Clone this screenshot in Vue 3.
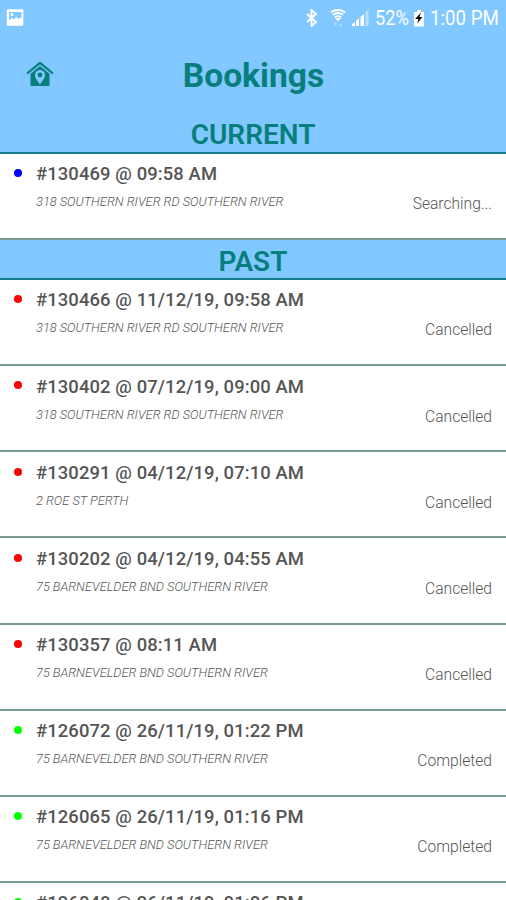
<script setup>
import { ref } from 'vue'

const current = ref([
  { id: 130469, time: '09:58 AM', address: '318 SOUTHERN RIVER RD SOUTHERN RIVER', status: 'Searching...' }
])

const past = ref([
  { id: 130466, time: '11/12/19, 09:58 AM', address: '318 SOUTHERN RIVER RD SOUTHERN RIVER', status: 'Cancelled' },
  { id: 130402, time: '07/12/19, 09:00 AM', address: '318 SOUTHERN RIVER RD SOUTHERN RIVER', status: 'Cancelled' },
  { id: 130291, time: '04/12/19, 07:10 AM', address: '2 ROE ST PERTH', status: 'Cancelled' },
  { id: 130202, time: '04/12/19, 04:55 AM', address: '75 BARNEVELDER BND SOUTHERN RIVER', status: 'Cancelled' },
  { id: 130357, time: '08:11 AM', address: '75 BARNEVELDER BND SOUTHERN RIVER', status: 'Cancelled' },
  { id: 126072, time: '26/11/19, 01:22 PM', address: '75 BARNEVELDER BND SOUTHERN RIVER', status: 'Completed' },
  { id: 126065, time: '26/11/19, 01:16 PM', address: '75 BARNEVELDER BND SOUTHERN RIVER', status: 'Completed' },
  { id: 126048, time: '26/11/19, 01:06 PM', address: '', status: '', color: 'green' }
])

const dotClass = (booking) => {
  if (booking.color) return booking.color
  if (booking.status === 'Cancelled') return 'red'
  if (booking.status === 'Completed') return 'green'
  return 'blue'
}
</script>

<template>
  <div class="screen">
    <div class="status-bar">
      <svg class="picture" width="18" height="18" viewBox="0 0 18 18">
        <rect x="0.8" y="0.3" width="16.500" height="16.500" rx="1" fill="#fff" />
        <path d="M3 3h12.500v7l-1.500-1.500-2 1.500-1.500-2.500-2.500 3-2-1.500-3 2.500z" fill="#80c8ff" />
        <circle cx="6" cy="5.500" r="1.500" fill="#fff" />
      </svg>
      <div class="status-right">
        <svg class="bluetooth" width="12" height="18" viewBox="0 0 12 18">
          <path d="M1 5l9 8-4.500 4V1L10 5l-9 8" fill="none" stroke="#fff" stroke-width="2" />
        </svg>
        <svg class="wifi" width="16" height="18" viewBox="0 0 16 18">
          <path d="M0.800 3.300q7.200-4.500 14.400 0M2.800 5.800q5.200-3.500 10.400 0M4.700 8.300q3.300-2.300 6.600 0" fill="none" stroke="#fff" stroke-width="1.900" />
          <path d="M5 9h6l-3 3.500z" fill="#fff" />
          <path d="M4 14h3l-1.500 3zM9 17h3l-1.500-3z" fill="#fff" opacity="0.5" />
        </svg>
        <svg class="signal" width="18" height="18" viewBox="0 0 18 18">
          <path d="M0 17v-2l3-2v4zM4 17v-5l3-3v8zM8.500 17V8l3.500-3v12z" fill="#fff" />
          <path d="M13.500 17V3l3-2.500V17z" fill="#fff" opacity="0.45" />
        </svg>
        <span class="percent">52%</span>
        <svg class="battery" width="12" height="18" viewBox="0 0 12 18">
          <path d="M4 1h4v2h3v14.500H1V3h3z" fill="#fff" />
          <path d="M8 3.500L2 10h3.300l-1 4.500 5.200-6.500h-3z" fill="#111" />
        </svg>
        <span class="clock">1:00 PM</span>
      </div>
    </div>

    <div class="header">
      <svg class="home" width="28" height="26" viewBox="0 0 28 26">
        <path d="M1.200 12.300L14 1.800l12.800 10.500" fill="none" stroke="#087f7c" stroke-width="2.200" />
        <path d="M4.500 12.800L14 5l9.500 7.800V25h-19z" fill="#087f7c" />
        <path d="M14 23.500c-2.200-3.700-5-6.300-5-9.500a5 5 0 0 1 10 0c0 3.200-2.800 5.800-5 9.500z" fill="#80c8ff" />
        <circle cx="14" cy="14" r="2.400" fill="#087f7c" />
      </svg>
      <h1>Bookings</h1>
    </div>

    <h2 class="section-title">CURRENT</h2>
    <div v-for="booking in current" :key="booking.id" class="booking first">
      <span class="dot" :class="dotClass(booking)"></span>
      <div class="info">
        <div class="title">#{{ booking.id }} @ {{ booking.time }}</div>
        <div class="address">{{ booking.address }}</div>
      </div>
      <div class="state">{{ booking.status }}</div>
    </div>

    <h2 class="section-title past">PAST</h2>
    <div v-for="booking in past" :key="booking.id" class="booking">
      <span class="dot" :class="dotClass(booking)"></span>
      <div class="info">
        <div class="title">#{{ booking.id }} @ {{ booking.time }}</div>
        <div class="address">{{ booking.address }}</div>
      </div>
      <div class="state">{{ booking.status }}</div>
    </div>
  </div>
</template>

<style>
body {
  margin: 0;
  overflow: hidden;
}
</style>

<style scoped>
.screen {
  width: 506px;
  height: 900px;
  overflow: hidden;
  background: #fff;
  font-family: Roboto, "Liberation Sans", sans-serif;
}

.status-bar {
  display: flex;
  justify-content: space-between;
  align-items: center;
  box-sizing: border-box;
  height: 36px;
  padding: 0 8px 0 6px;
  background: #80c8ff;
  color: #fff;
}

.status-right {
  display: flex;
  align-items: center;
}

.wifi {
  margin-left: 12px;
}

.signal {
  margin-left: 6px;
}

.percent,
.clock {
  font-size: 21px;
  line-height: 38px;
  white-space: nowrap;
  transform-origin: left center;
}

.percent {
  width: 34px;
  margin-left: 5px;
  transform: scaleX(0.87);
}

.battery {
  margin-left: 4px;
}

.clock {
  width: 68px;
  margin-left: 5px;
  transform: scaleX(0.89);
}

.header {
  display: grid;
  grid-template-columns: 80px 1fr 80px;
  align-items: center;
  height: 78px;
  background: #80c8ff;
}

.home {
  margin: -3px 0 0 26px;
}

h1 {
  margin: 0;
  padding: 1px 0 0 1px;
  color: #087f7c;
  font-size: 33.6px;
  font-weight: 700;
  line-height: 40px;
  text-align: center;
}

.section-title {
  box-sizing: border-box;
  height: 39.5px;
  margin: 0;
  border-bottom: 2px solid #167d91;
  background: #80c8ff;
  color: #087f7c;
  font-size: 28px;
  font-weight: 600;
  line-height: 41px;
  text-align: center;
}

.section-title.past {
  height: 40.5px;
  line-height: 43px;
}

.booking {
  display: flex;
  box-sizing: border-box;
  height: 86.17px;
  padding: 9.4px 14px 0 14px;
  border-bottom: 2px solid #7b9c96;
}

.booking.first {
  height: 86px;
}

.dot {
  width: 8px;
  height: 8px;
  margin-top: 5.8px;
  border-radius: 50%;
}

.red {
  background: #f00;
}

.green {
  background: #0f0;
}

.blue {
  background: #00f;
}

.info {
  flex: 1;
  margin-left: 14px;
}

.title {
  color: #555;
  font-size: 18.4px;
  font-weight: 500;
  letter-spacing: 0.12px;
  line-height: 22px;
  white-space: nowrap;
}

.address {
  margin-top: 9px;
  color: #555;
  font-size: 12.8px;
  font-style: italic;
  font-weight: 300;
  line-height: 16px;
  white-space: nowrap;
}

.state {
  margin-top: 31px;
  color: #555;
  font-size: 15.6px;
  font-weight: 300;
  line-height: 20px;
}
</style>
